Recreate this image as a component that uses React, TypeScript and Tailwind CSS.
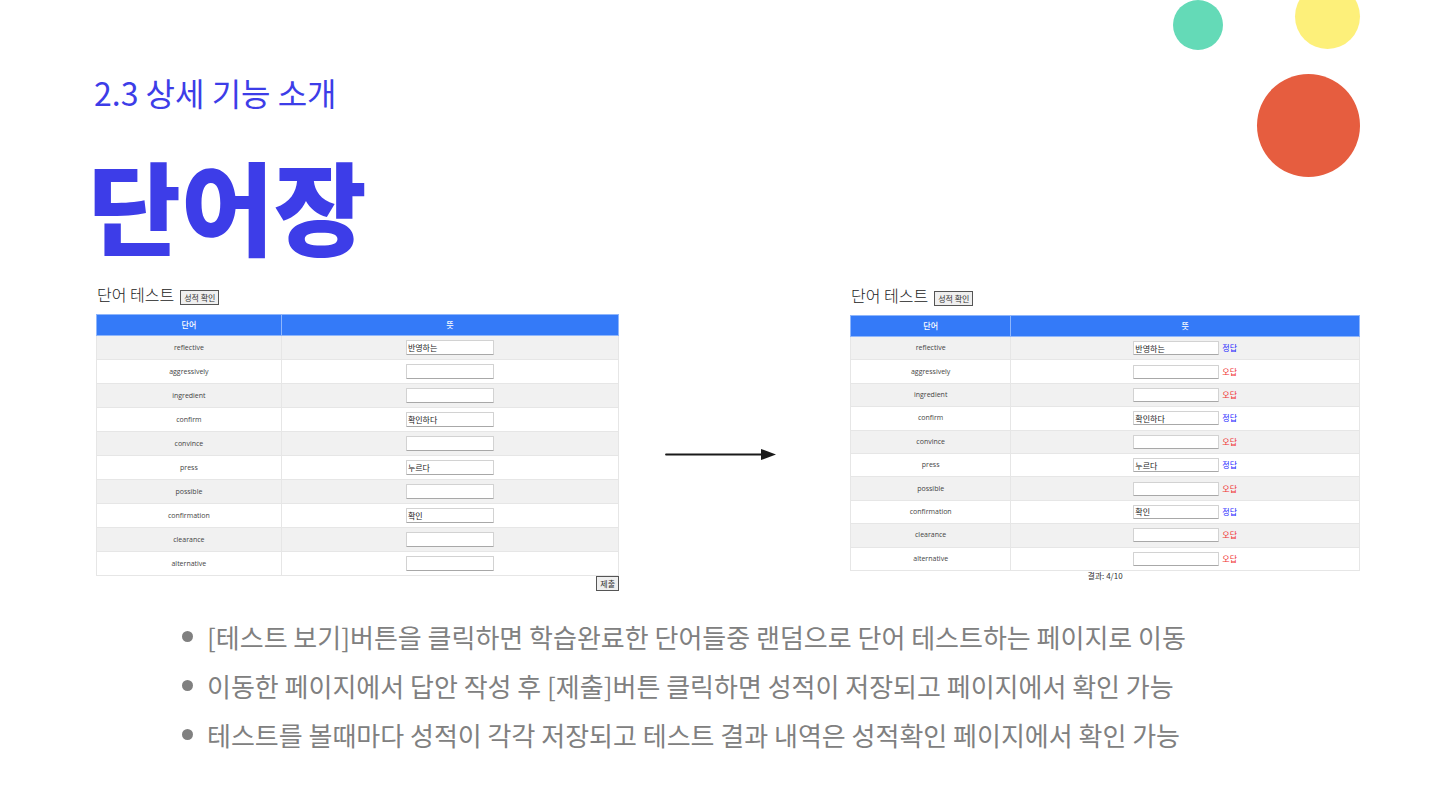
type Word = { word: string; answer: string };

const words: Word[] = [
  { word: "reflective", answer: "반영하는" },
  { word: "aggressively", answer: "" },
  { word: "ingredient", answer: "" },
  { word: "confirm", answer: "확인하다" },
  { word: "convince", answer: "" },
  { word: "press", answer: "누르다" },
  { word: "possible", answer: "" },
  { word: "confirmation", answer: "확인" },
  { word: "clearance", answer: "" },
  { word: "alternative", answer: "" },
];

const notes = [
  "[테스트 보기]버튼을 클릭하면 학습완료한 단어들중 랜덤으로 단어 테스트하는 페이지로 이동",
  "이동한 페이지에서 답안 작성 후 [제출]버튼 클릭하면 성적이 저장되고 페이지에서 확인 가능",
  "테스트를 볼때마다 성적이 각각 저장되고 테스트 결과 내역은 성적확인 페이지에서 확인 가능",
];

function SmallButton({ children }: { children: string }) {
  return (
    <button
      type="button"
      className="h-[15px] border border-[#555] bg-[#efefef] px-[3px] text-[8px] leading-[12px] text-[#333]"
    >
      {children}
    </button>
  );
}

function TestHeader() {
  return (
    <div className="flex h-[21px] items-end gap-[6px] pl-px">
      <h2 className="text-[16px] font-light leading-[22px] text-[#222]">단어 테스트</h2>
      <SmallButton>성적 확인</SmallButton>
    </div>
  );
}

function WordTable({ graded }: { graded: boolean }) {
  return (
    <table
      className={`w-full table-fixed border-collapse text-center text-[8px] leading-[12px] text-[#444] ${
        graded ? "h-[256px]" : "h-[262px]"
      }`}
    >
      <thead>
        <tr className="h-[21px] bg-[#347af8] text-white">
          <th
            className={`border border-[#8fb6fb] p-0 font-medium ${graded ? "w-[31.5%]" : "w-[35.4%]"}`}
          >
            단어
          </th>
          <th className="border border-[#8fb6fb] p-0 font-medium">뜻</th>
        </tr>
      </thead>
      <tbody>
        {words.map(({ word, answer }) => (
          <tr key={word} className="odd:bg-[#f1f1f1]">
            <td className="border border-[#e6e6e6] p-0 font-['Open_Sans',sans-serif] text-[7px]">
              {word}
            </td>
            <td className="border border-[#e6e6e6] p-0">
              <div className="flex items-center justify-center gap-[3px]">
                <input
                  type="text"
                  aria-label={`${word} 뜻`}
                  defaultValue={answer}
                  className={`rounded-[1px] border border-[#d2d2d2] border-b-[#a8a8a8] bg-white px-[1px] text-[8px] leading-[12px] text-[#222] ${
                    graded ? "h-[14px] w-[86px]" : "h-[15px] w-[88px]"
                  }`}
                />
                {graded && (
                  <span className={answer ? "text-[#2222ff]" : "text-[#f03030]"}>
                    {answer ? "정답" : "오답"}
                  </span>
                )}
              </div>
            </td>
          </tr>
        ))}
      </tbody>
    </table>
  );
}

export default function App() {
  return (
    <main className="relative min-h-screen overflow-hidden bg-white pb-12 pl-24 pr-20 pt-[68px] font-['Noto_Sans_CJK_KR',sans-serif]">
      <div aria-hidden="true">
        <div className="absolute right-[217px] top-0 size-[50px] rounded-full bg-[#64dab7]" />
        <div className="absolute -top-4 right-20 size-[65px] rounded-full bg-[#fdf07a]" />
        <div className="absolute right-20 top-[74px] size-[103px] rounded-full bg-[#e65d3f]" />
      </div>

      <header className="-ml-2 text-[#3d3de8]">
        <p className="pl-1.5 text-[32px] leading-[48px]">2.3 상세 기능 소개</p>
        <h1 className="mt-[26px] text-[101px] font-black leading-[124px]">단어장</h1>
      </header>

      <div className="mt-[18px] grid grid-cols-[523fr_231fr_510fr]">
        <section>
          <TestHeader />
          <div className="mt-[9px]">
            <WordTable graded={false} />
          </div>
          <div className="flex justify-end">
            <SmallButton>제출</SmallButton>
          </div>
        </section>

        <div className="pl-[46px] pt-[164px]">
          <svg width="112" height="12" viewBox="0 0 112 12" aria-hidden="true">
            <path d="M1 6.5H98" stroke="#1a1a1a" strokeWidth="1.8" strokeLinecap="round" />
            <path d="M96 1L111 6.5L96 12Z" fill="#1a1a1a" />
          </svg>
        </div>

        <section className="pt-px">
          <TestHeader />
          <div className="mt-[9px]">
            <WordTable graded />
          </div>
          <p className="text-center text-[8px] leading-[10px] text-[#333]">결과: 4/10</p>
        </section>
      </div>

      <ul className="mt-[21px] pl-[86px] text-[26px] leading-[49px] text-[#808080]">
        {notes.map((note) => (
          <li key={note} className="flex items-center gap-[14px]">
            <span className="size-[11px] shrink-0 rounded-full bg-[#808080]" />
            {note}
          </li>
        ))}
      </ul>
    </main>
  );
}
